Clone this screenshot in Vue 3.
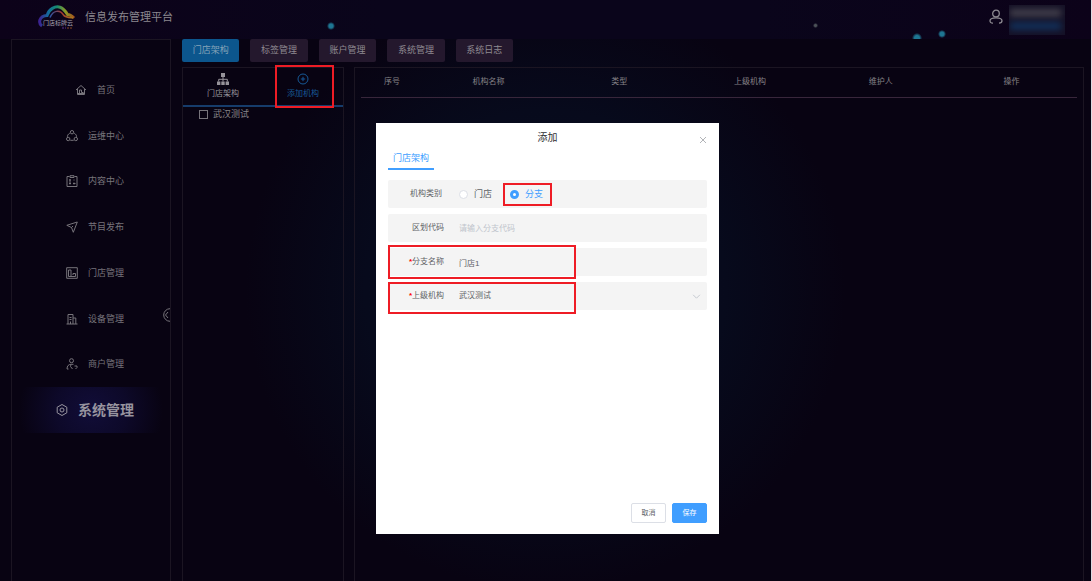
<script setup>
import { ref } from 'vue'

const menu = [
  { name: '首页', icon: 'home' },
  { name: '运维中心', icon: 'ops' },
  { name: '内容中心', icon: 'content' },
  { name: '节目发布', icon: 'send' },
  { name: '门店管理', icon: 'store' },
  { name: '设备管理', icon: 'device' },
  { name: '商户管理', icon: 'merchant' },
  { name: '系统管理', icon: 'system' },
]
const activeMenu = ref('系统管理')

const tabs = ['门店架构', '标签管理', '账户管理', '系统管理', '系统日志']
const activeTab = ref('门店架构')

const columns = ['序号', '机构名称', '类型', '上级机构', '维护人', '操作']

const kind = ref('分支')
const code = ref('')
const branchName = ref('门店1')
const parent = ref('武汉测试')
const checked = ref(false)
</script>

<template>
  <div class="page">
    <header class="header">
      <svg class="logo" viewBox="0 0 38 25" role="img" aria-label="门店标牌云">
        <defs>
          <linearGradient id="cloud" x1="0" y1="0" x2="1" y2="0">
            <stop offset="0" stop-color="#3b2391" />
            <stop offset="0.25" stop-color="#126b9b" />
            <stop offset="0.5" stop-color="#168b70" />
            <stop offset="0.75" stop-color="#8d9a25" />
            <stop offset="1" stop-color="#a3521d" />
          </linearGradient>
          <linearGradient id="inner" x1="0" y1="0" x2="1" y2="0">
            <stop offset="0" stop-color="#2b55a8" />
            <stop offset="0.5" stop-color="#a0392f" />
            <stop offset="1" stop-color="#a97a1c" />
          </linearGradient>
        </defs>
        <path d="M4 21C0 18 1 11 9 10.500C11 4 17 .8 22 2.200C26 3.500 28 7 29.500 9.500C32 9.500 34 11 36 13" fill="none" stroke="url(#cloud)" stroke-width="3" />
        <path d="M12 12.500C15 5 22 4.500 25.500 10C27 12.500 31 12.500 35 12.800" fill="none" stroke="url(#inner)" stroke-width="1.5" />
        <text x="5" y="20" font-size="6" font-weight="400" fill="#a9a5b3">门店标牌云</text>
        <path d="M24 23h4" stroke="#5a3290" stroke-width="1" stroke-dasharray="2 1" />
        <path d="M29 23h6" stroke="#8a4a20" stroke-width="1" stroke-dasharray="2 1" />
      </svg>
      <h1 class="title">信息发布管理平台</h1>
      <i class="dot dot-a"></i>
      <i class="dot dot-b"></i>
      <i class="dot dot-c"></i>
      <i class="dot dot-d"></i>
      <div class="user">
        <svg class="user-icon" viewBox="0 0 14 16">
          <circle cx="7" cy="4.500" r="3.300" />
          <path d="M4 14.200C1.500 14.200 1 12.800 1 11.800C1 9.800 3.500 8.800 7 8.800S13 9.800 13 11.800C13 12.800 12.500 14.200 10 14.200" />
        </svg>
        <div class="user-info">
          <span class="smudge"></span>
          <span class="smudge smudge-blue"></span>
        </div>
      </div>
    </header>

    <div class="body">
      <aside class="sidebar">
        <nav class="menu">
          <a
            v-for="m in menu"
            :key="m.name"
            href="#"
            class="menu-item"
            :class="{ active: m.name === activeMenu }"
            @click.prevent="activeMenu = m.name"
          >
            <svg class="menu-icon" viewBox="0 0 12 12">
              <template v-if="m.icon === 'home'">
                <path d="M1 6L6 1.500L11 6M2.500 5V10.500H9.500V5M4.500 10V6H6.500V8.500H8.500" />
                <path d="M3 9.500H9" />
              </template>
              <template v-else-if="m.icon === 'ops'">
                <circle cx="6" cy="2.200" r="1.700" />
                <circle cx="2.200" cy="9" r="1.700" />
                <circle cx="9.800" cy="9" r="1.700" />
                <path d="M3.800 3.200C2 4.200 1.400 5.500 1.400 6.800M8.200 3.200C10 4.200 10.600 5.500 10.600 6.800M4.300 10.300H7.700" />
              </template>
              <template v-else-if="m.icon === 'content'">
                <path d="M3.500 1.500H1V11.500H11V1.500H8.500M4 .7H8V2.500H4Z" />
                <path d="M3 5H5M3 8.500H5M4 4V9.500M7 8.500H9.500M8 7.500V9.500M7.500 5H8.500" />
              </template>
              <template v-else-if="m.icon === 'send'">
                <path d="M.8 4.300L11.300 1L7.300 11.300L5.500 6.500Z" />
                <path d="M5.500 6.500L7 5" />
              </template>
              <template v-else-if="m.icon === 'store'">
                <path d="M.7 .7H11.300V11.300H.7ZM2.500 9.500V3H5V9.500H9.500V6.500H7V8M2.500 9.500H5" />
              </template>
              <template v-else-if="m.icon === 'device'">
                <path d="M.5 11H11.500M2 11V1.500H7V11M7 5H9.800V11M3.500 4.500H5.500M3.500 6.500H5.500M4.500 8.500V11" />
              </template>
              <template v-else-if="m.icon === 'merchant'">
                <circle cx="5.500" cy="2.700" r="2" />
                <path d="M1 11C1 8 2.500 6.300 5 6.300H7.500M1 11H2.500M5 6.500L4.500 8.500L6.500 11M8.500 8H11V9.500L9.500 11" />
              </template>
              <template v-else>
                <path d="M6 .5L10.800 3.200V8.800L6 11.500L1.200 8.800V3.200Z" />
                <circle cx="6" cy="6" r="2" />
              </template>
            </svg>
            <span>{{ m.name }}</span>
          </a>
        </nav>
        <button class="collapse" type="button" aria-label="收起">
          <svg viewBox="0 0 8 14"><path d="M8 .7A6.300 6.300 0 0 0 8 13.300M6 4L3.500 7L6 10" /></svg>
        </button>
      </aside>

      <main class="main">
        <div class="tabs">
          <button
            v-for="t in tabs"
            :key="t"
            type="button"
            class="tab"
            :class="{ active: t === activeTab }"
            @click="activeTab = t"
          >{{ t }}</button>
        </div>

        <div class="panels">
          <section class="tree">
            <div class="tree-head">
              <button class="tree-action" type="button">
                <svg viewBox="0 0 12 12" class="org">
                  <path d="M4 0H8V4H4ZM0 8.500H3.400V12H0ZM4.300 8.500H7.700V12H4.300ZM8.600 8.500H12V12H8.600Z" />
                  <path class="line" d="M6 4V8.500M1.700 8.500V6.300H10.300V8.500" />
                </svg>
                <span>门店架构</span>
              </button>
              <button class="tree-action add" type="button">
                <svg viewBox="0 0 12 12" class="plus">
                  <circle cx="6" cy="6" r="5" />
                  <path d="M6 3.800V8.200M3.800 6H8.200" />
                </svg>
                <span>添加机构</span>
              </button>
            </div>
            <label class="node">
              <input v-model="checked" type="checkbox" />
              <span>武汉测试</span>
            </label>
          </section>

          <section class="list">
            <table class="table">
              <thead>
                <tr>
                  <th v-for="c in columns" :key="c">{{ c }}</th>
                </tr>
              </thead>
            </table>
          </section>
        </div>
      </main>
    </div>

    <div class="layer">
      <form class="dialog" role="dialog" aria-labelledby="dialog-title" @submit.prevent>
        <div class="dialog-head">
          <h2 id="dialog-title">添加</h2>
          <button class="close" type="button" aria-label="关闭">
            <svg viewBox="0 0 8 8"><path d="M1 1L7 7M7 1L1 7" /></svg>
          </button>
        </div>
        <div class="dialog-tabs">
          <button class="dialog-tab" type="button">门店架构</button>
        </div>
        <div class="rows">
          <div class="row" role="radiogroup" aria-labelledby="kind-label">
            <span id="kind-label" class="label kind-label">机构类别</span>
            <label class="radio">
              <input v-model="kind" type="radio" name="kind" value="门店" />
              <span>门店</span>
            </label>
            <label class="radio marked">
              <input v-model="kind" type="radio" name="kind" value="分支" />
              <span>分支</span>
            </label>
          </div>
          <div class="row">
            <label class="label" for="code">区划代码</label>
            <input id="code" v-model="code" class="field" type="text" placeholder="请输入分支代码" />
          </div>
          <div class="row marked-row">
            <label class="label" for="branch"><b>*</b>分支名称</label>
            <input id="branch" v-model="branchName" class="field" type="text" />
          </div>
          <div class="row marked-row marked-parent">
            <label class="label" for="parent"><b>*</b>上级机构</label>
            <select id="parent" v-model="parent" class="field">
              <option>武汉测试</option>
            </select>
            <svg class="caret" viewBox="0 0 8 8"><path d="M1 2.500L4 5.500L7 2.500" /></svg>
          </div>
        </div>
        <div class="dialog-foot">
          <button class="btn" type="button">取消</button>
          <button class="btn primary" type="submit">保存</button>
        </div>
      </form>
    </div>
  </div>
</template>

<style>
body {
  background: #080312;
}
</style>

<style scoped>
* {
  box-sizing: border-box;
}
.page {
  display: flex;
  flex-direction: column;
  min-height: 100vh;
  border-right: 1px solid #dcdce2;
  background: radial-gradient(circle at 50% 50%, #080e22 0, #070a1c 180px, #080312 300px);
  color: #878489;
  font-family: "Liberation Sans", "Noto Sans CJK SC", sans-serif;
  font-size: 9px;
  line-height: 14px;
}
button,
input,
select {
  margin: 0;
  padding: 0;
  border: 0;
  background: none;
  color: inherit;
  font: inherit;
}
svg {
  display: block;
  fill: none;
  stroke: currentColor;
}

.header {
  position: relative;
  display: flex;
  align-items: flex-start;
  height: 39px;
  padding: 5px 26px 0 38px;
  overflow: hidden;
  background: linear-gradient(90deg, #0c0219, #0a051b 35%, #0a051b 70%, #0c0219);
}
.logo {
  width: 38px;
  height: 25px;
}
.logo text {
  stroke: none;
}
.title {
  margin: 3px 0 0 9px;
  color: #8b888f;
  font-size: 11px;
  font-weight: 400;
  line-height: 18px;
}
.dot {
  position: absolute;
  width: 8px;
  height: 8px;
  border-radius: 50%;
  background: radial-gradient(circle, #1e7693 35%, transparent 72%);
}
.dot-a {
  left: 30%;
  top: 22px;
}
.dot-b {
  left: 74.5%;
  top: 23px;
  width: 5px;
  height: 5px;
  background: radial-gradient(circle, #4b5057 30%, transparent 75%);
}
.dot-c {
  left: 83.6%;
  top: 33px;
  width: 10px;
  height: 10px;
}
.dot-d {
  left: 86%;
  top: 30px;
}
.user {
  display: flex;
  gap: 6px;
  margin-left: auto;
}
.user-icon {
  width: 14px;
  height: 16px;
  margin-top: 4px;
  color: #8d8a91;
  stroke-width: 1.3;
}
.user-info {
  display: flex;
  flex-direction: column;
  gap: 5px;
  width: 56px;
  height: 30px;
  padding: 4px 4px 0 1px;
  overflow: hidden;
  background: #151126;
}
.smudge {
  height: 8px;
  background: #403e4a;
  filter: blur(3px);
}
.smudge-blue {
  background: #122f58;
}

.body {
  display: flex;
  flex: 1;
  padding: 0 7px 0 11px;
}
.sidebar {
  position: relative;
  flex: none;
  width: 160px;
  padding-top: 27px;
  border: 1px solid #1b1522;
  border-bottom: 0;
}
.menu {
  display: grid;
  grid-auto-rows: 1fr;
  height: 366px;
}
.menu-item {
  display: flex;
  align-items: center;
  justify-content: center;
  gap: 10px;
  padding-left: 8px;
  color: #77747b;
  text-decoration: none;
}
.menu-icon {
  width: 12px;
  height: 12px;
}
.menu-item.active {
  background: radial-gradient(ellipse 72px 70px at 50% 50%, #110d38, #0d0929 50%, transparent);
  color: #97949f;
  font-size: 14px;
  font-weight: 700;
}
.collapse {
  position: absolute;
  right: 0;
  top: 268px;
  color: #77747b;
}
.collapse svg {
  width: 8px;
  height: 14px;
}

.main {
  display: flex;
  flex: 1;
  flex-direction: column;
  gap: 5px;
  min-width: 0;
  padding-left: 11px;
}
.tabs {
  display: flex;
  gap: 11px;
  max-width: 331px;
}
.tab {
  flex: 1;
  height: 23px;
  padding-bottom: 2px;
  border-radius: 2px;
  background: #24182d;
  color: #8f8a91;
  white-space: nowrap;
}
.tab.active {
  background: #0c568d;
  color: #84a3b8;
}
.panels {
  display: flex;
  flex: 1;
  gap: 10px;
}
.tree {
  flex: none;
  width: 162px;
  border: 1px solid #1b1522;
  border-bottom: 0;
}
.tree-head {
  display: grid;
  grid-template-columns: 1fr 1fr;
  height: 39px;
  border-bottom: 2px solid #163c6b;
}
.tree-action {
  position: relative;
  display: flex;
  flex-direction: column;
  align-items: center;
  justify-content: center;
  gap: 2px;
  padding-top: 1px;
  color: #96939a;
  font-size: 8px;
}
.tree-action svg {
  width: 12px;
  height: 12px;
}
.org {
  fill: currentColor;
  stroke: none;
}
.org .line {
  fill: none;
  stroke: currentColor;
}
.add {
  color: #175997;
}
.add::after {
  content: "";
  position: absolute;
  inset: -3px 9px -3px 12px;
  border: 2px solid #ee1c25;
}
.node {
  display: flex;
  align-items: center;
  gap: 5px;
  padding-left: 16px;
}
.node input {
  width: 9px;
  height: 9px;
  border: 1px solid #77747b;
  appearance: none;
}
.node input:checked {
  background: #175997;
}
.list {
  flex: 1;
  padding: 0 6px;
  border: 1px solid #1b1522;
  border-bottom: 0;
}
.table {
  width: 100%;
  border-collapse: collapse;
  table-layout: fixed;
}
.table th {
  height: 29px;
  padding: 0;
  border-bottom: 1px solid #38263b;
  color: #858287;
  font-size: 8px;
  font-weight: 400;
}
.table th:first-child {
  width: 62px;
}

.layer {
  position: fixed;
  inset: 0;
  display: flex;
  align-items: flex-start;
  justify-content: center;
  padding: 123px 0 0 3px;
}
.dialog {
  display: flex;
  flex-direction: column;
  width: 343px;
  min-height: 411px;
  padding: 0 12px 11px;
  background: #fff;
  color: #606266;
}
.dialog-head {
  position: relative;
  padding-top: 8px;
}
.dialog-head h2 {
  margin: 0;
  color: #303133;
  font-size: 10px;
  font-weight: 400;
  line-height: 14px;
  text-align: center;
}
.close {
  position: absolute;
  right: 0;
  top: 13px;
  color: #909399;
}
.close svg {
  width: 8px;
  height: 8px;
  stroke-width: 0.7;
}
.dialog-tabs {
  display: flex;
  padding-top: 3px;
}
.dialog-tab {
  height: 22px;
  padding: 0 5px 1px;
  border-bottom: 2px solid #409eff;
  color: #409eff;
}
.rows {
  display: grid;
  gap: 6px;
  margin-top: 10px;
}
.row {
  position: relative;
  display: flex;
  align-items: center;
  height: 28px;
  border-radius: 2px;
  background: #f4f4f4;
  font-size: 8px;
}
.label {
  flex: none;
  width: 56px;
  margin-right: 15px;
  text-align: right;
}
.label b {
  color: #f00;
}
.kind-label {
  padding-right: 2px;
}
.radio {
  position: relative;
  display: flex;
  align-items: center;
  gap: 6px;
  margin-right: 18px;
  font-size: 9px;
}
.radio input {
  width: 9px;
  height: 9px;
  border: 1px solid #dcdfe6;
  border-radius: 50%;
  background: #fff;
  appearance: none;
}
.radio input:checked {
  border: 3px solid #409eff;
}
.radio input:checked + span {
  color: #409eff;
}
.marked::after {
  content: "";
  position: absolute;
  inset: -4px -9px -5px -7px;
  border: 2px solid #ee1c25;
}
.marked-row::after {
  content: "";
  position: absolute;
  inset: -3px 131px -3px 0;
  border: 2px solid #ee1c25;
  pointer-events: none;
}
.marked-parent::after {
  inset: 0 131px -4px 0;
}
.field {
  flex: 1;
  min-width: 0;
  height: 28px;
  outline: 0;
  appearance: none;
}
.field::placeholder {
  color: #c0c4cc;
  opacity: 1;
}
.caret {
  position: absolute;
  right: 6px;
  width: 9px;
  height: 9px;
  color: #c0c4cc;
  stroke-width: 0.8;
}
.dialog-foot {
  display: flex;
  justify-content: flex-end;
  gap: 6px;
  margin-top: auto;
}
.btn {
  width: 35px;
  height: 20px;
  border: 1px solid #dcdfe6;
  border-radius: 2px;
  font-size: 7px;
}
.btn.primary {
  border-color: #409eff;
  background: #409eff;
  color: #fff;
}
</style>
